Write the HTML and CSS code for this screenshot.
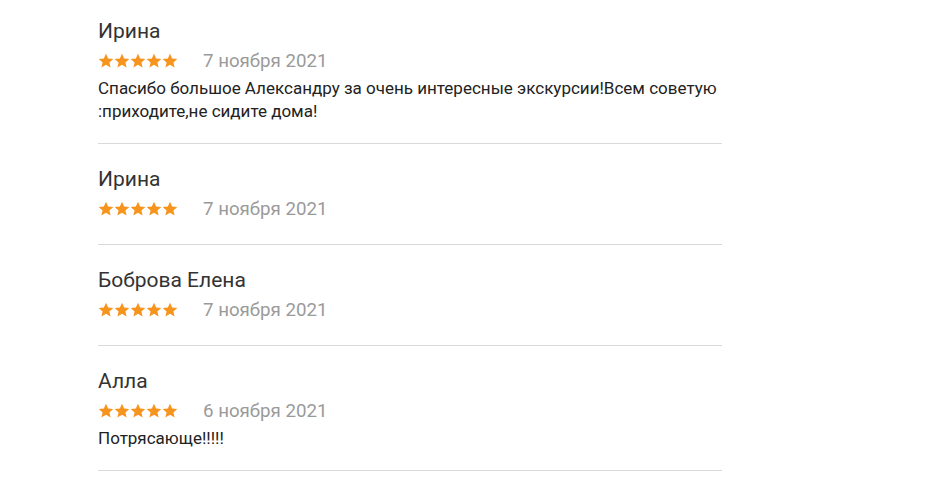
FILE: index.html
```html
<!DOCTYPE html>
<html lang="ru">
<head>
    <meta charset="UTF-8">
    <meta name="viewport" content="width=device-width, initial-scale=1.0">
    <title>Отзывы</title>
    <link rel="stylesheet" href="styles.css">
</head>
<body>
    <svg width="0" height="0" class="defs">
        <defs>
            <symbol id="star" viewBox="0 0 24 24">
                <path d="M12 1.2l3.2 7.1 7.8.7-5.9 5.2 1.8 7.6L12 17.8l-6.9 4 1.8-7.6L1 9l7.8-.7z"/>
            </symbol>
        </defs>
    </svg>
    <main class="reviews">
        <div class="review">
            <div class="review-name">Ирина</div>
            <div class="review-meta">
                <span class="stars">
                    <svg><use href="#star"/></svg><svg><use href="#star"/></svg><svg><use href="#star"/></svg><svg><use href="#star"/></svg><svg><use href="#star"/></svg>
                </span>
                <span class="review-date">7 ноября 2021</span>
            </div>
            <div class="review-text">Спасибо большое Александру за очень интересные экскурсии!Всем советую :приходите,не сидите дома!</div>
        </div>
        <div class="review">
            <div class="review-name">Ирина</div>
            <div class="review-meta">
                <span class="stars">
                    <svg><use href="#star"/></svg><svg><use href="#star"/></svg><svg><use href="#star"/></svg><svg><use href="#star"/></svg><svg><use href="#star"/></svg>
                </span>
                <span class="review-date">7 ноября 2021</span>
            </div>
        </div>
        <div class="review">
            <div class="review-name">Боброва Елена</div>
            <div class="review-meta">
                <span class="stars">
                    <svg><use href="#star"/></svg><svg><use href="#star"/></svg><svg><use href="#star"/></svg><svg><use href="#star"/></svg><svg><use href="#star"/></svg>
                </span>
                <span class="review-date">7 ноября 2021</span>
            </div>
        </div>
        <div class="review">
            <div class="review-name">Алла</div>
            <div class="review-meta">
                <span class="stars">
                    <svg><use href="#star"/></svg><svg><use href="#star"/></svg><svg><use href="#star"/></svg><svg><use href="#star"/></svg><svg><use href="#star"/></svg>
                </span>
                <span class="review-date">6 ноября 2021</span>
            </div>
            <div class="review-text">Потрясающе!!!!!</div>
        </div>
    </main>
</body>
</html>
```

FILE: styles.css
```css
body {
    margin: 0;
    padding: 0;
    background-color: #fff;
    font-family: Roboto, "Noto Sans", sans-serif;
}

.defs {
    position: absolute;
}

.reviews {
    width: 624px;
    margin-left: 98px;
}

.review {
    padding: 20px 0 20px;
    border-bottom: 1px solid #d9d9d9;
}

.review:first-child {
    padding-top: 16px;
}

.review-name {
    font-size: 21px;
    line-height: 30px;
    color: #333;
}

.review-meta {
    display: flex;
    align-items: center;
    height: 30px;
}

.stars {
    display: flex;
    width: 105px;
}

.stars svg {
    width: 16px;
    height: 16px;
    fill: #f7941d;
}

.review-date {
    font-size: 18.7px;
    color: #9a9a9a;
}

.review-text {
    margin-top: 1px;
    font-size: 17px;
    line-height: 23px;
    color: #222;
}
```
